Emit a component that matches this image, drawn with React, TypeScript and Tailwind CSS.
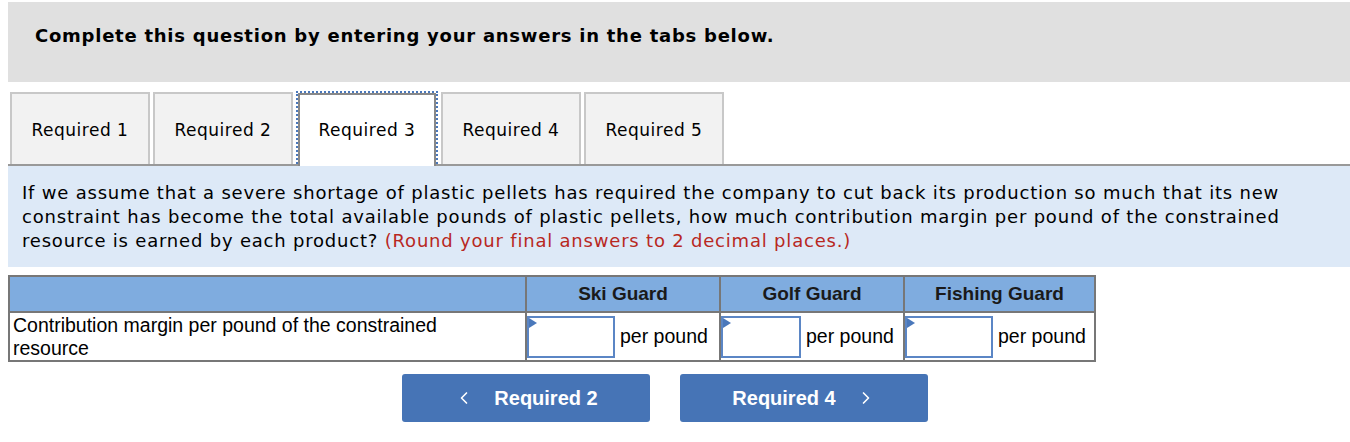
import { ChevronLeft, ChevronRight } from 'lucide-react';

const tabs = ['Required 1', 'Required 2', 'Required 3', 'Required 4', 'Required 5'];
const active = 2;

function AnswerCell() {
  return (
    <div className="relative h-[42px] border-2 border-[#5b86c5] bg-white">
      {/* little blue flag in the corner */}
      <span className="absolute left-0 top-0 h-0 w-0 border-y-[5px] border-l-[8px] border-y-transparent border-l-[#4a78bb]" />
    </div>
  );
}

export default function App() {
  return (
    <div className="w-[1350px] bg-white pt-[2px] font-['DejaVu_Sans',Verdana,sans-serif] text-black">
      <div className="ml-[8px] h-[80px] bg-[#e0e0e0] pl-[27px] pt-[22px]">
        <h1 className="text-[18px] font-bold leading-[24px] tracking-[0.75px]">
          Complete this question by entering your answers in the tabs below.
        </h1>
      </div>

      {/* tabs */}
      <div className="ml-[8px] mt-[10px] flex items-start gap-[3px] border-b-2 border-[#999] pl-[2px]">
        {tabs.map((t, i) =>
          i === active ? (
            <div
              key={t}
              className="-mb-[2px] ml-[2px] mr-[2px] mt-[1px] outline-2 outline-dotted outline-[#4a78bb]"
            >
              <div className="flex h-[73px] w-[138px] items-center justify-center border-x-2 border-t-2 border-[#888] bg-white pt-[1px] text-[17px] tracking-[0.5px]">
                {t}
              </div>
            </div>
          ) : (
            <div
              key={t}
              className="flex h-[72px] w-[140px] items-center justify-center border-x-2 border-t-2 border-[#c8c8c8] bg-[#f2f2f2] pt-[4px] text-[17px] tracking-[0.5px]"
            >
              {t}
            </div>
          )
        )}
      </div>

      {/* question */}
      <div className="relative ml-[8px] bg-[#dde9f7] px-[14px] pb-[14px] pt-[15px] text-[18px] leading-[24px] tracking-[0.8px]">
        If we assume that a severe shortage of plastic pellets has required the company to cut back its production so much that its new
        <br />
        constraint has become the total available pounds of plastic pellets, how much contribution margin per pound of the constrained
        <br />
        resource is earned by each product?{' '}
        <span className="text-[#b8281f]">(Round your final answers to 2 decimal places.)</span>
      </div>

      {/* answer table */}
      <table className="ml-[8px] mt-[8px] w-[1088px] border-collapse border-2 border-[#777] font-['Liberation_Sans',Arial,sans-serif]">
        <thead>
          <tr className="h-[36px] bg-[#7facdf] text-[19px] font-bold leading-[22px] text-[#1a1a1a]">
            <th className="w-[517px] border-2 border-[#777] p-0" />
            <th className="w-[194px] border-2 border-[#777] p-0">Ski Guard</th>
            <th className="w-[184px] border-2 border-[#777] p-0">Golf Guard</th>
            <th className="border-2 border-[#777] p-0">Fishing Guard</th>
          </tr>
        </thead>
        <tbody>
          <tr className="h-[47px] text-[19.5px] leading-[23px]">
            <td className="border-2 border-[#777] pb-0 pl-[3px] pt-[1px] align-top leading-[23px]">
              Contribution margin per pound of the constrained
              <br />
              resource
            </td>
            {[88, 80, 88].map((w, i) => (
              <td key={i} className="border-2 border-[#777] p-0">
                <div className="flex items-center">
                  <div style={{ width: w }} className="shrink-0">
                    <AnswerCell />
                  </div>
                  <span className="pl-[5px]">per pound</span>
                </div>
              </td>
            ))}
          </tr>
        </tbody>
      </table>

      {/* nav buttons */}
      <div className="mt-[12px] flex justify-center gap-[30px] pr-[20px] font-['Liberation_Sans',Arial,sans-serif]">
        <button className="flex h-[48px] w-[248px] items-center justify-center gap-[20px] rounded-[3px] bg-[#4674b6] text-[20px] font-bold text-white">
          <ChevronLeft size={20} strokeWidth={2} />
          Required 2
        </button>
        <button className="flex h-[48px] w-[248px] items-center justify-center gap-[20px] rounded-[3px] bg-[#4674b6] text-[20px] font-bold text-white">
          Required 4
          <ChevronRight size={20} strokeWidth={2} />
        </button>
      </div>
    </div>
  );
}
